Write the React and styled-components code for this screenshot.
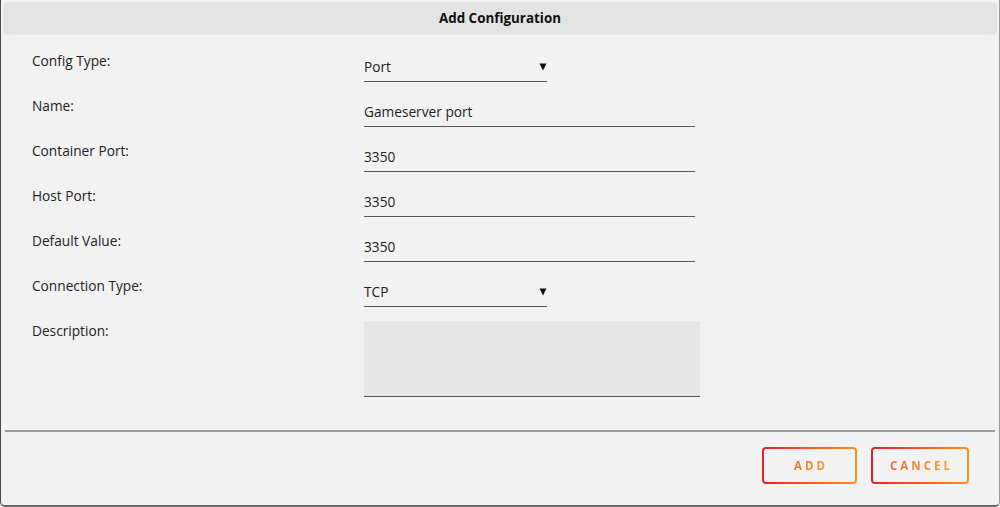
import React from "react";
import styled, { createGlobalStyle } from "styled-components";

const GlobalStyle = createGlobalStyle`
  html, body {
    margin: 0;
    padding: 0;
    background: #ffffff;
  }
  * {
    box-sizing: border-box;
  }
`;

const Dialog = styled.div`
  width: 1000px;
  height: 507px;
  display: flex;
  flex-direction: column;
  padding: 2px 2px 0;
  background: #f2f2f2;
  border-left: 1px solid #4a4a4a;
  border-right: 1px solid #9a9a9a;
  border-bottom: 2px solid #6a6a6a;
  border-radius: 0 0 5px 5px;
  font-family: "Open Sans", "Noto Sans", sans-serif;
  color: #222;
`;

const Header = styled.div`
  height: 32px;
  display: flex;
  align-items: center;
  justify-content: center;
  background: #e3e3e3;
  border-radius: 5px;
  font-size: 13.4px;
  font-weight: 700;
  color: #111;
  box-shadow: 0 1px 1px rgba(0, 0, 0, 0.04);
`;

const Form = styled.div`
  display: flex;
  flex-direction: column;
  gap: 15px;
  padding: 18px 0 0 29px;
`;

const Row = styled.div`
  display: grid;
  grid-template-columns: 332px auto;
  align-items: start;
`;

const Label = styled.div`
  font-size: 13.7px;
  line-height: 18px;
`;

const Field = styled.div`
  position: relative;
  width: ${(p) => p.$width}px;
  height: 30px;
  display: flex;
  align-items: center;
  font-size: 13.7px;
  border-bottom: 1px solid #5a5a5a;
  padding-bottom: 1px;
`;

const Arrow = styled.svg`
  position: absolute;
  right: 0;
  top: 11px;
  width: 8px;
  height: 8px;
  fill: #111;
`;

const TextArea = styled.div`
  width: 336px;
  height: 76px;
  background: #e6e6e6;
  border-bottom: 1.5px solid #555;
  margin-top: -1px;
`;

const Divider = styled.div`
  margin: 33px 2px 0;
  height: 2px;
  background: #9c9c9c;
`;

const Footer = styled.div`
  display: flex;
  justify-content: flex-end;
  gap: 14px;
  padding: 15px 28px 0 0;
`;

const ButtonFrame = styled.div`
  width: ${(p) => p.$width}px;
  height: 37px;
  padding: 2px;
  border-radius: 4px;
  background: linear-gradient(90deg, #e41f2b 0%, #f25a25 50%, #ff8f1c 100%);
`;

const ButtonInner = styled.div`
  height: 100%;
  display: flex;
  align-items: center;
  justify-content: center;
  border-radius: 2px;
  background: #f2f2f2;
`;

const ButtonText = styled.span`
  font-size: 11.5px;
  font-weight: 700;
  letter-spacing: 3px;
  padding-left: 3px;
  background: linear-gradient(90deg, #f26a2a, #ff9a2c);
  -webkit-background-clip: text;
  background-clip: text;
  color: transparent;
`;

const rows = [
  { label: "Config Type:", value: "Port", select: true },
  { label: "Name:", value: "Gameserver port" },
  { label: "Container Port:", value: "3350" },
  { label: "Host Port:", value: "3350" },
  { label: "Default Value:", value: "3350" },
  { label: "Connection Type:", value: "TCP", select: true },
];

export default function App() {
  return (
    <>
      <GlobalStyle />
      <Dialog>
        <Header>Add Configuration</Header>
        <Form>
          {rows.map((r) => (
            <Row key={r.label}>
              <Label>{r.label}</Label>
              <Field $width={r.select ? 183 : 331}>
                {r.value}
                {r.select && (
                  <Arrow viewBox="0 0 8 8">
                    <path d="M0.5 0.5 H7.5 L4 7.5 Z" />
                  </Arrow>
                )}
              </Field>
            </Row>
          ))}
          <Row>
            <Label>Description:</Label>
            <TextArea />
          </Row>
        </Form>
        <Divider />
        <Footer>
          <ButtonFrame $width={95}>
            <ButtonInner>
              <ButtonText>ADD</ButtonText>
            </ButtonInner>
          </ButtonFrame>
          <ButtonFrame $width={98}>
            <ButtonInner>
              <ButtonText>CANCEL</ButtonText>
            </ButtonInner>
          </ButtonFrame>
        </Footer>
      </Dialog>
    </>
  );
}
